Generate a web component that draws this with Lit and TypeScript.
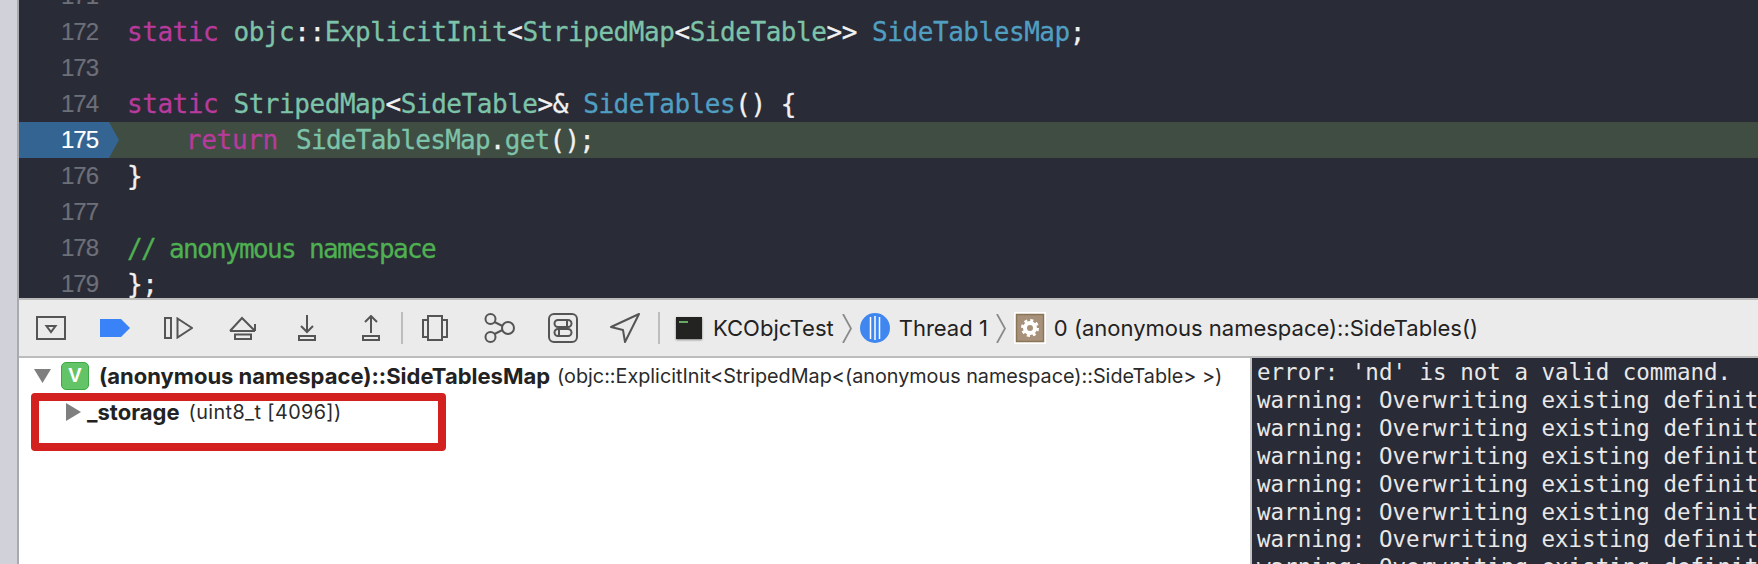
import { LitElement, html, css, svg } from "lit";
import { customElement } from "lit/decorators.js";

type Tok = [string, string];
const k = (t: string): Tok => [t, "kw"];
const g = (t: string): Tok => [t, "ty"];
const b = (t: string): Tok => [t, "fn"];
const w = (t: string): Tok => [t, "pl"];
const c = (t: string): Tok => [t, "cm"];

const LINES: { n: number; toks: Tok[]; cur?: boolean }[] = [
  { n: 171, toks: [] },
  { n: 172, toks: [k("static"), w(" "), g("objc"), w("::"), g("ExplicitInit"), w("<"), g("StripedMap"), w("<"), g("SideTable"), w(">> "), b("SideTablesMap"), w(";")] },
  { n: 173, toks: [] },
  { n: 174, toks: [k("static"), w(" "), g("StripedMap"), w("<"), g("SideTable"), w(">& "), b("SideTables"), w("() {")] },
  { n: 175, cur: true, toks: [["    ", "ind"], k("return"), [" ", "wide"], g("SideTablesMap"), w("."), g("get"), w("();")] },
  { n: 176, toks: [w("}")] },
  { n: 177, toks: [] },
  { n: 178, toks: [c("// anonymous namespace")] },
  { n: 179, toks: [w("};")] },
];

const CONSOLE = [
  "error: 'nd' is not a valid command.",
  ...Array(7).fill("warning: Overwriting existing definition for"),
];

const ic = (w: number, h: number, body: unknown) =>
  html`<svg width=${w} height=${h} viewBox="0 0 ${w} ${h}" fill="none" stroke="#555" stroke-width="2">${body}</svg>`;

const chevron = html`<svg width="10" height="29" viewBox="0 0 10 29" fill="none" stroke="#8a8a8a" stroke-width="1.800"><path d="M1 0l8 14.500L1 29"/></svg>`;

@customElement("app-root")
export class AppRoot extends LitElement {
  static styles = css`
    :host { display: block; width: 1758px; height: 564px; overflow: hidden; background: #fff; }
    .page { display: flex; height: 564px; }
    .strip { width: 17px; flex: none; background: #d0d1d9; }
    .main { flex: 1; min-width: 0; border-left: 2px solid #a9aab0; display: flex; flex-direction: column; }
    .code { height: 298px; flex: none; overflow: hidden; background: #292b36; }
    .lines { margin-top: -22px; }
    .row { height: 36px; display: flex; align-items: center; position: relative; }
    .row.cur { background: #3f4d43; }
    .gutter { position: relative; width: 79px; flex: none; height: 36px; display: flex; align-items: center; justify-content: flex-end;
      font: 24px/36px "Liberation Sans", sans-serif; letter-spacing: -1px; color: #6d6f79; -webkit-text-stroke: 0.2px currentColor; }
    .gutter span { position: relative; }
    .cur .gutter { color: #fff; }
    .arrow { position: absolute; left: 0; top: 0; }
    .src { margin-left: 29px; white-space: pre; font: 26px/36px "DejaVu Sans Mono", monospace; letter-spacing: -0.45px; font-variant-ligatures: none; -webkit-text-stroke: 0.3px currentColor; }
    .cur .src { letter-spacing: -0.75px; }
    .kw { color: #b83a9c; }
    .ty { color: #7cc3a9; }
    .fn { color: #509fc2; }
    .pl { color: #f1f1f1; }
    .ind { letter-spacing: -0.95px; }
    .cur .kw { letter-spacing: -0.3px; }
    .cur .wide { letter-spacing: 2.5px; }
    .cm { color: #4fb052; letter-spacing: -1.65px; position: relative; top: 1px; }

    .toolbar { flex: none; box-sizing: border-box; margin-top: 2px; background: #ebebeb; box-shadow: 0 -2px 0 #bcbcbc;
      display: flex; align-items: center; border-bottom: 2px solid #bcbcbc; height: 58px; padding-left: 17px;
      font: 22px "Inter", sans-serif; color: #222; }
    .toolbar svg { display: block; flex: none; }
    .sep { width: 2px; height: 32px; background: #bdbdbd; flex: none; }
    .crumb { white-space: nowrap; }
    .term { box-shadow: 0 1px 2px rgba(0,0,0,.45); }

    .panes { flex: 1; min-height: 0; display: flex; }
    .vars { position: relative; width: 1231px; flex: none; background: #fff; font: 19.8px "Inter", sans-serif; color: #2a2a2a; }
    .var { display: flex; align-items: center; white-space: nowrap; }
    .var1 { height: 34px; padding: 1px 0 2px 15px; }
    .var2 { height: 28px; padding: 3px 0 0 47px; }
    .var strong { font-size: 22px; font-weight: 700; color: #222; margin-right: 9px; }
    .var1 strong { margin-right: 7px; }
    .arr { letter-spacing: 0.4px; }
    .badge { width: 28px; height: 28px; box-sizing: border-box; margin: 0 10px 0 10px; flex: none; border-radius: 5px; background: #62c466; border: 1.5px solid #3fa846;
      color: #fff; font: bold 20px/25px "Liberation Sans", sans-serif; text-align: center; }
    .tri2 { margin-right: 6px; }
    .hl { position: absolute; left: 12px; top: 35px; width: 415px; height: 58px; box-sizing: border-box; border: 8px solid #d3211f; border-radius: 4px; }
    .console { flex: 1; min-width: 0; border-left: 2px solid #c4c4c4; background: #292b36; overflow: hidden; padding: 1px 0 0 5px;
      font: 22.5px/27.9px "DejaVu Sans Mono", monospace; color: #e8e8e8; white-space: pre; font-variant-ligatures: none; }
    .g1 { width: 34px; } .g2 { width: 34px; } .g3 { width: 36px; } .g4 { width: 41px; } .g5 { width: 46px; } .g6 { width: 21px; }
    .g7 { width: 19px; } .g8 { width: 36px; } .g9 { width: 33px; } .g10 { width: 32px; } .g11 { width: 18px; } .g12 { width: 16px; }
    .g13 { width: 11px; } .g14 { width: 8px; } .g15 { width: 9px; }
  `;

  private tb() {
    return html`<div class="toolbar">
      ${ic(30, 24, svg`<rect x="1" y="1" width="28" height="22"/><path d="M10.500 10h9l-4.500 6z"/>`)}
      <span class="g1"></span>
      <svg width="30" height="18" viewBox="0 0 30 18"><path d="M0 0h21l9 9-9 9H0z" fill="#3a82f7"/></svg>
      <span class="g2"></span>
      ${ic(29, 22, svg`<rect x="1" y="1" width="6" height="20"/><path d="M13.500 1.500L28 11 13.500 20.500z"/>`)}
      <span class="g3"></span>
      ${ic(28, 24, svg`<path d="M1 15L13 2l13 13M1 15h25M26 8v7"/><rect x="6" y="18.500" width="16" height="4.500"/>`)}
      <span class="g4"></span>
      ${ic(18, 26, svg`<path d="M9 0v17M3 11l6 6 6-6"/><rect x="1" y="21" width="16" height="4"/>`)}
      <span class="g5"></span>
      ${ic(18, 26, svg`<path d="M9 18V1M3 7l6-6 6 6"/><rect x="1" y="21" width="16" height="4"/>`)}
      <span class="g6"></span>
      <div class="sep"></div>
      <span class="g7"></span>
      ${ic(26, 26, svg`<path d="M6 5H1v17h5M20 5h5v17h-5"/><rect x="6" y="1" width="14" height="24"/>`)}
      <span class="g8"></span>
      ${ic(31, 30, svg`<circle cx="6.500" cy="6" r="5"/><circle cx="6.500" cy="24" r="5"/><circle cx="24" cy="15" r="6"/><path d="M10.500 9l8 4M10.500 21l8-4"/>`)}
      <span class="g9"></span>
      ${ic(30, 30, svg`<rect x="1" y="1" width="28" height="28" rx="5"/><rect x="6.500" y="7" width="17" height="7" rx="3.500"/><rect x="6.500" y="16" width="17" height="7" rx="3.500"/><path d="M19 7v7M11 16v7"/>`)}
      <span class="g10"></span>
      ${ic(30, 30, svg`<path d="M1 14L29 1 15 29l-2-12z" stroke-linejoin="round"/>`)}
      <span class="g11"></span>
      <div class="sep"></div>
      <span class="g12"></span>
      <svg class="term" width="26" height="22" viewBox="0 0 26 22"><rect width="26" height="22" fill="#232422"/><rect x="3" y="4" width="9" height="2" fill="#67a863"/></svg>
      <span class="g13"></span>
      <span class="crumb">KCObjcTest</span>
      <span class="g14"></span>
      ${chevron}
      <span class="g14"></span>
      <svg width="30" height="30" viewBox="0 0 30 30"><circle cx="15" cy="15" r="15" fill="#3f87ee"/><path d="M10.500 4v22M15 3v24M19.500 4v22" stroke="#fff" stroke-width="1.500"/></svg>
      <span class="g15"></span>
      <span class="crumb">Thread 1</span>
      <span class="g14"></span>
      ${chevron}
      <span class="g14"></span>
      <svg width="32" height="32" viewBox="0 0 32 32"><rect width="32" height="32" fill="#fff"/><rect x="2.500" y="2.500" width="27" height="27" fill="#a8917a" stroke="#8b7559" stroke-width="1.500"/><circle cx="16" cy="16" r="5" fill="none" stroke="#fff" stroke-width="4"/><circle cx="16" cy="16" r="7.500" fill="none" stroke="#fff" stroke-width="3" stroke-dasharray="3 2.890"/></svg>
      <span class="g14"></span>
      <span class="crumb">0 (anonymous namespace)::SideTables()</span>
    </div>`;
  }

  render() {
    return html`<div class="page">
      <div class="strip"></div>
      <div class="main">
        <div class="code"><div class="lines">
          ${LINES.map((l) => html`<div class="row ${l.cur ? "cur" : ""}">
            <div class="gutter">
              ${l.cur ? html`<svg class="arrow" width="100" height="36" viewBox="0 0 100 36"><path d="M0 0h90l10 18-10 18H0z" fill="#346491"/></svg>` : ""}
              <span>${l.n}</span>
            </div>
            <div class="src">${l.toks.map(([t, cl]) => html`<span class=${cl}>${t}</span>`)}</div>
          </div>`)}
        </div></div>
        ${this.tb()}
        <div class="panes">
          <div class="vars">
            <div class="var var1">
              <svg width="17" height="14" viewBox="0 0 17 14"><path d="M0 0h17L8.500 14z" fill="#7f7f7f"/></svg>
              <span class="badge">V</span>
              <strong>(anonymous namespace)::SideTablesMap</strong>(objc::ExplicitInit&lt;StripedMap&lt;(anonymous namespace)::SideTable&gt; &gt;)
            </div>
            <div class="var var2">
              <svg class="tri2" width="15" height="18" viewBox="0 0 15 18"><path d="M0 0l15 9L0 18z" fill="#7f7f7f"/></svg>
              <strong>_storage</strong><span class="arr">(uint8_t [4096])</span>
            </div>
            <div class="hl"></div>
          </div>
          <div class="console">${CONSOLE.map((s) => html`<div>${s}</div>`)}</div>
        </div>
      </div>
    </div>`;
  }
}
